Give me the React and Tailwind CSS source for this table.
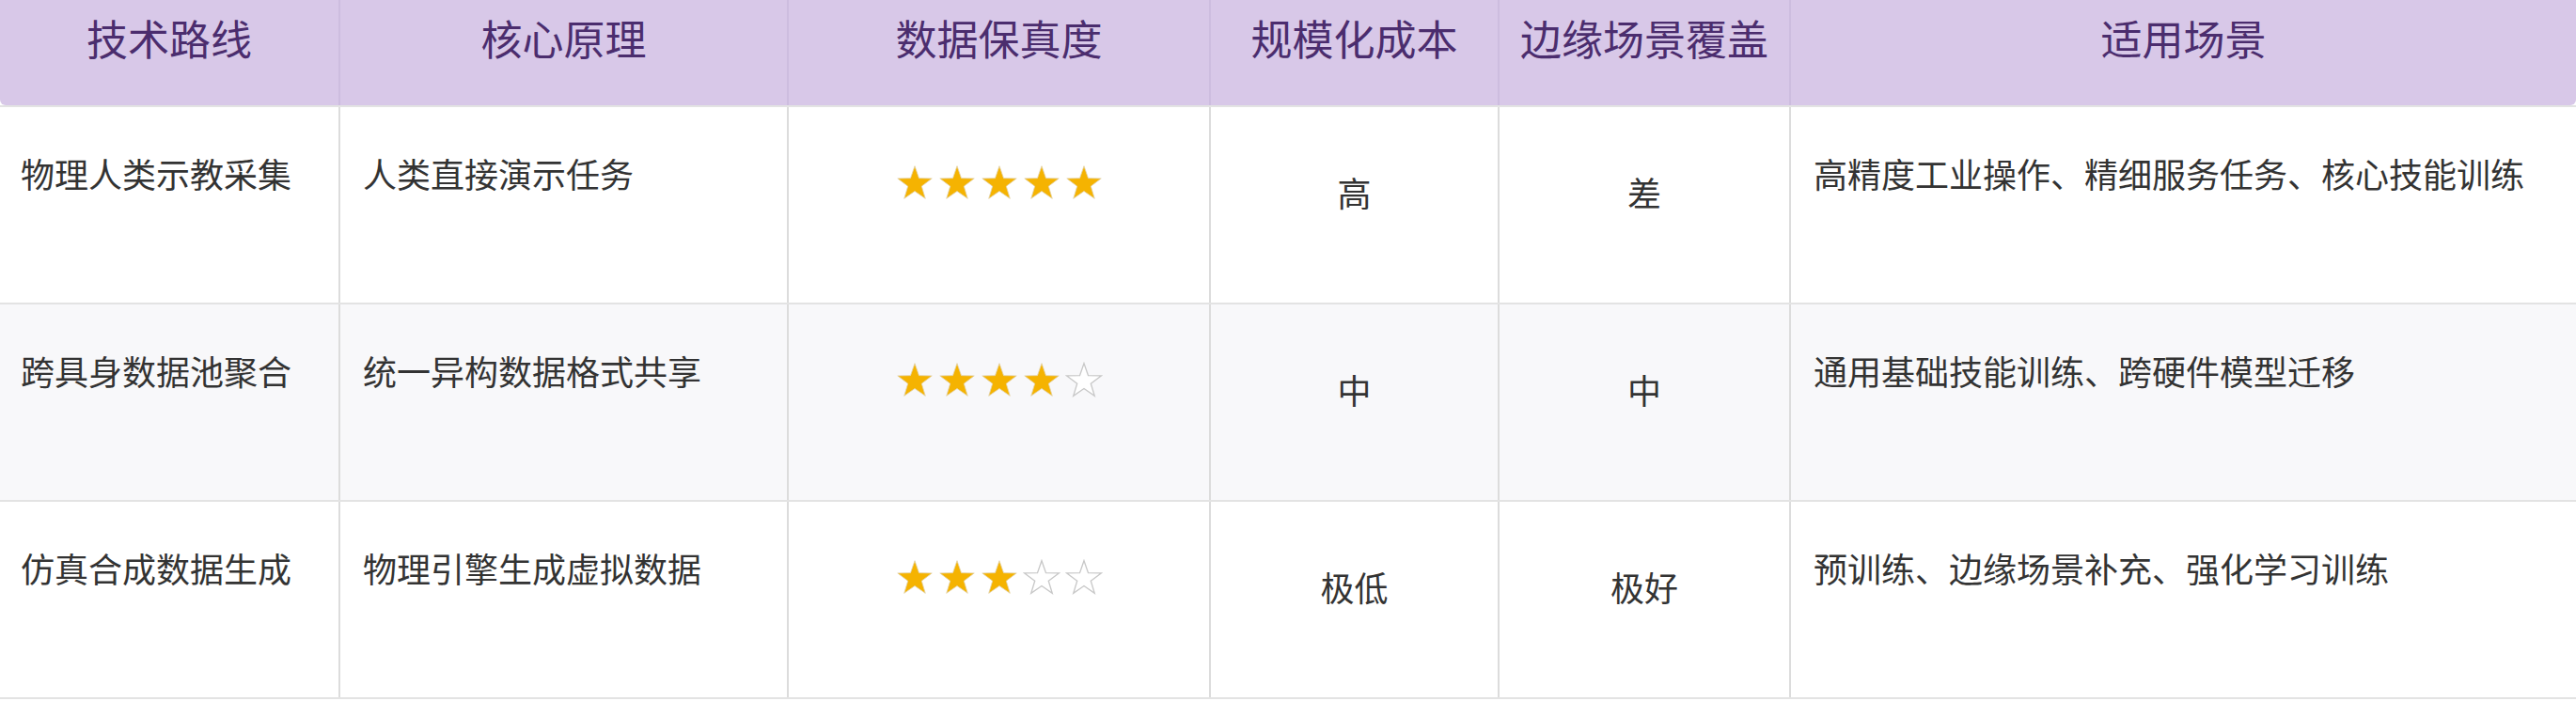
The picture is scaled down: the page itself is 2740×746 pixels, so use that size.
import React from "react";

const rows = [
  {
    route: "物理人类示教采集",
    principle: "人类直接演示任务",
    stars: 5,
    cost: "高",
    coverage: "差",
    usage: "高精度工业操作、精细服务任务、核心技能训练",
  },
  {
    route: "跨具身数据池聚合",
    principle: "统一异构数据格式共享",
    stars: 4,
    cost: "中",
    coverage: "中",
    usage: "通用基础技能训练、跨硬件模型迁移",
  },
  {
    route: "仿真合成数据生成",
    principle: "物理引擎生成虚拟数据",
    stars: 3,
    cost: "极低",
    coverage: "极好",
    usage: "预训练、边缘场景补充、强化学习训练",
  },
];

const headers = ["技术路线", "核心原理", "数据保真度", "规模化成本", "边缘场景覆盖", "适用场景"];

const cols = "grid grid-cols-[362px_477px_449px_307px_310px_835px]";

function Star({ filled }) {
  return (
    <svg width="40" height="40" viewBox="0 0 24 24">
      <polygon
        points="12,1 14.7,8.78 22.94,8.95 16.37,13.92 18.76,21.8 12,17.1 5.24,21.8 7.63,13.92 1.06,8.95 9.3,8.78"
        fill={filled ? "#f5b301" : "#ffffff"}
        stroke={filled ? "#e2d3a8" : "#c8c8c8"}
        strokeWidth={filled ? "0.5" : "0.8"}
        strokeLinejoin="miter"
      />
    </svg>
  );
}

export default function App() {
  return (
    <div className="w-[2740px] h-[746px] bg-white overflow-hidden font-['Noto_Sans_CJK_SC','Noto_Sans',sans-serif]">
      {/* header */}
      <div className="border-b-2 border-[#e3e3e3]">
        <div className={`${cols} h-[112px] bg-[#d8c8e8] rounded-b-[6px] text-[#4b2d6e] text-[44px] leading-[60px]`}>
          {headers.map((h, i) => (
            <div
              key={h}
              className={`pt-[10px] text-center ${i < headers.length - 1 ? "border-r-2 border-[#cdbddf]" : ""}`}
            >
              {h}
            </div>
          ))}
        </div>
      </div>

      {/* body */}
      {rows.map((r, idx) => (
        <div
          key={r.route}
          className={`${cols} h-[210px] border-b-2 border-[#e3e3e3] text-[36px] leading-[54px] text-[#333333] ${idx === 1 ? "bg-[#f8f8fa]" : "bg-white"}`}
        >
          <div className="border-r-2 border-[#dcdcdc] pl-[22px] pt-[43px]">{r.route}</div>
          <div className="border-r-2 border-[#dcdcdc] pl-6 pt-[43px]">{r.principle}</div>
          <div className="border-r-2 border-[#dcdcdc] pt-[61px] flex justify-center items-start gap-[5px]">
            {[0, 1, 2, 3, 4].map((s) => (
              <Star key={s} filled={s < r.stars} />
            ))}
          </div>
          <div className="border-r-2 border-[#dcdcdc] pt-[63px] text-center">{r.cost}</div>
          <div className="border-r-2 border-[#dcdcdc] pt-[63px] text-center">{r.coverage}</div>
          <div className="pl-6 pt-[43px]">{r.usage}</div>
        </div>
      ))}
    </div>
  );
}
